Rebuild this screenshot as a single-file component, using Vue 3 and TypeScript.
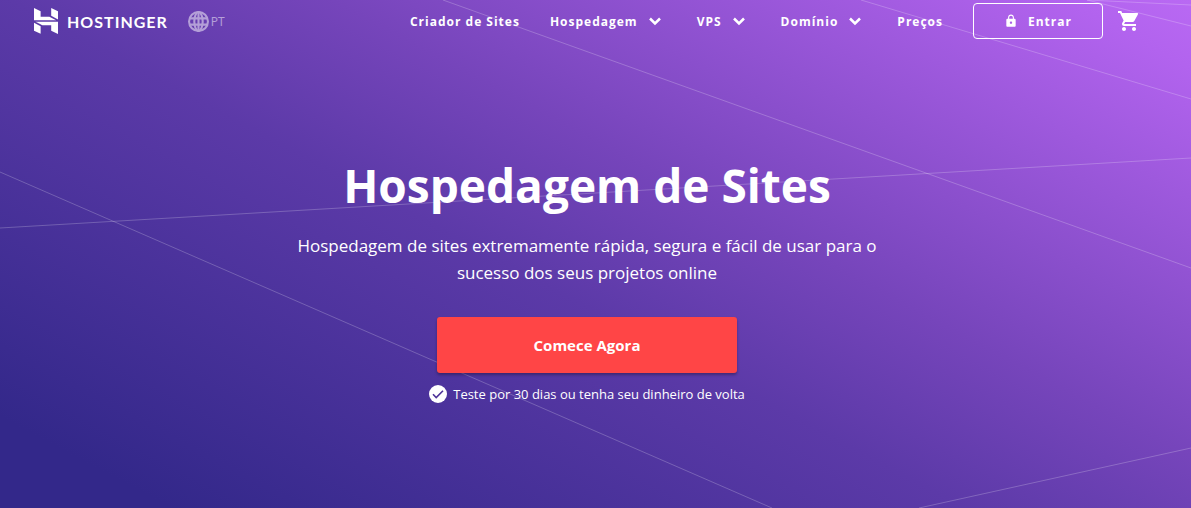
<script setup lang="ts">
interface NavItem {
  label: string
  menu: boolean
}

const navItems: NavItem[] = [
  { label: 'Criador de Sites', menu: false },
  { label: 'Hospedagem', menu: true },
  { label: 'VPS', menu: true },
  { label: 'Domínio', menu: true },
  { label: 'Preços', menu: false },
]
</script>

<template>
  <div class="page">
    <svg class="rays" viewBox="0 0 1191 508" preserveAspectRatio="none" aria-hidden="true">
      <path d="M443 0L1191 268M861 0L1191 99M1087 0L1191 26M1087 0L1191 5M0 228L1191 158M0 172L772 508M919 508L1191 448" />
    </svg>

    <header class="header">
      <a class="logo" href="#" aria-label="Hostinger">
        <svg class="mark" viewBox="1.8 0 20.4 24" preserveAspectRatio="none" aria-hidden="true">
          <path d="M16.415 0v7.16l5.785 3.384V2.949L16.415 0ZM1.8 0v11.237h18.815L14.89 8.09l-7.457-.003V3.024L1.8 0Zm14.615 20.894v-5.019l-7.514-.005c.007.033-5.82-3.197-5.82-3.197l19.119.091V24l-5.785-3.106ZM1.8 13.551v7.343l5.633 2.949v-6.988L1.8 13.551Z" />
        </svg>
        <span class="wordmark">HOSTINGER</span>
      </a>
      <button class="language" type="button">
        <svg class="globe" viewBox="0 0 20 20" aria-hidden="true">
          <circle cx="10" cy="10" r="9" />
          <ellipse cx="10" cy="10" rx="4" ry="9" />
          <path d="M1.5 7h17M1.5 13h17M10 1v18" />
        </svg>
        <span>PT</span>
      </button>

      <nav class="nav">
        <template v-for="item in navItems" :key="item.label">
          <button v-if="item.menu" class="nav-item" type="button">
            {{ item.label }}
            <svg class="chevron" viewBox="0 0 24 24" aria-hidden="true">
              <path d="M7 9.500l5 5 5-5" />
            </svg>
          </button>
          <a v-else class="nav-item" href="#">{{ item.label }}</a>
        </template>
      </nav>

      <a class="login" href="#">
        <svg class="lock" viewBox="0 0 24 24" aria-hidden="true">
          <path d="M18 8h-1V6c0-2.760-2.240-5-5-5S7 3.240 7 6v2H6c-1.100 0-2 .9-2 2v10c0 1.100.9 2 2 2h12c1.100 0 2-.9 2-2V10c0-1.100-.9-2-2-2zm-6 9c-1.100 0-2-.9-2-2s.9-2 2-2 2 .9 2 2-.9 2-2 2zm3.100-9H8.900V6c0-1.710 1.390-3.100 3.100-3.100s3.100 1.390 3.100 3.100v2z" />
        </svg>
        Entrar
      </a>
      <a class="cart" href="#" aria-label="Carrinho">
        <svg viewBox="0 0 24 24" aria-hidden="true">
          <path d="M7 18c-1.100 0-1.990.9-1.990 2S5.900 22 7 22s2-.9 2-2-.9-2-2-2zM1 2v2h2l3.600 7.590-1.350 2.450c-.16.28-.25.61-.25.96 0 1.100.9 2 2 2h12v-2H7.420c-.14 0-.25-.11-.25-.25l.03-.12.9-1.630h7.450c.75 0 1.410-.41 1.750-1.030l3.580-6.490A1 1 0 0 0 20 4H5.210l-.94-2H1zm16 16c-1.100 0-1.990.9-1.990 2s.89 2 1.990 2 2-.9 2-2-.9-2-2-2z" />
        </svg>
      </a>
    </header>

    <main class="hero">
      <h1>Hospedagem de Sites</h1>
      <p class="lead">Hospedagem de sites extremamente rápida, segura e fácil de usar para o sucesso dos seus projetos online</p>
      <button class="cta" type="button">Comece Agora</button>
      <p class="guarantee">
        <svg viewBox="0 0 18 18" aria-hidden="true">
          <circle cx="9" cy="9" r="9" />
          <path d="M4 9.300l3.200 3.200L14 5.700" />
        </svg>
        Teste por 30 dias ou tenha seu dinheiro de volta
      </p>
    </main>
  </div>
</template>

<style>
body {
  margin: 0;
}
</style>

<style scoped>
.page {
  position: relative;
  box-sizing: border-box;
  min-height: 100vh;
  background: linear-gradient(28deg, #33288a 8%, #5c3aa8 45%, #7645bb 60%, #b263ee 94%, #b969f3);
  color: #fff;
  font-family: "Open Sans", "Noto Sans", sans-serif;
}

.rays {
  position: absolute;
  inset: 0;
  width: 100%;
  height: 100%;
  fill: none;
  stroke: #fff;
  stroke-opacity: 0.22;
}

.rays path {
  vector-effect: non-scaling-stroke;
}

.header {
  position: relative;
  display: flex;
  align-items: center;
  height: 42px;
  padding: 0 50px 0 34px;
}

a,
button {
  color: inherit;
  font-family: inherit;
  text-decoration: none;
}

button {
  padding: 0;
  border: 0;
  background: none;
  cursor: pointer;
}

.logo {
  display: flex;
  align-items: center;
  gap: 9px;
}

.mark {
  width: 24px;
  height: 26px;
  fill: #fff;
}

.wordmark {
  font-family: Lato, "Open Sans", sans-serif;
  font-size: 16px;
  font-weight: 700;
  letter-spacing: 1px;
}

.language {
  display: flex;
  align-items: center;
  gap: 2px;
  margin-left: 20px;
  font-size: 12px;
  opacity: 0.5;
}

.globe {
  width: 21px;
  height: 21px;
  fill: none;
  stroke: #fff;
  stroke-width: 2;
}

.nav {
  display: flex;
  align-items: center;
  gap: 30px;
  margin-left: auto;
}

.nav-item {
  display: flex;
  align-items: center;
  gap: 5px;
  font-size: 12px;
  font-weight: 700;
  letter-spacing: 1px;
}

.chevron {
  width: 24px;
  height: 24px;
  fill: none;
  stroke: #fff;
  stroke-width: 2.5;
}

.login {
  display: flex;
  align-items: center;
  justify-content: center;
  gap: 10px;
  box-sizing: border-box;
  width: 130px;
  height: 36px;
  margin-left: 30px;
  border: 1px solid #fff;
  border-radius: 4px;
  font-size: 12px;
  font-weight: 700;
  letter-spacing: 1px;
}

.lock {
  width: 14px;
  height: 14px;
  fill: #fff;
}

.cart {
  display: flex;
  margin-left: 14px;
}

.cart svg {
  width: 24px;
  height: 24px;
  fill: #fff;
}

.hero {
  position: relative;
  display: flex;
  flex-direction: column;
  align-items: center;
  padding: 112px 17px 0 0;
  text-align: center;
}

h1 {
  margin: 0;
  font-size: 46px;
  font-weight: 700;
  line-height: 62px;
}

.lead {
  max-width: 600px;
  margin: 16px 0 0;
  font-size: 17px;
  line-height: 27px;
}

.cta {
  width: 300px;
  height: 56px;
  margin-top: 31px;
  border-radius: 3px;
  background: #ff4546;
  box-shadow: 0 2px 3px rgba(0, 0, 0, 0.3);
  font-size: 15px;
  font-weight: 700;
}

.guarantee {
  display: flex;
  align-items: center;
  gap: 6px;
  margin: 10px 0 0;
  font-size: 13px;
  line-height: 22px;
}

.guarantee svg {
  width: 18px;
  height: 18px;
  fill: #fff;
}

.guarantee path {
  fill: none;
  stroke: #4d3299;
  stroke-width: 1.6;
}
</style>
